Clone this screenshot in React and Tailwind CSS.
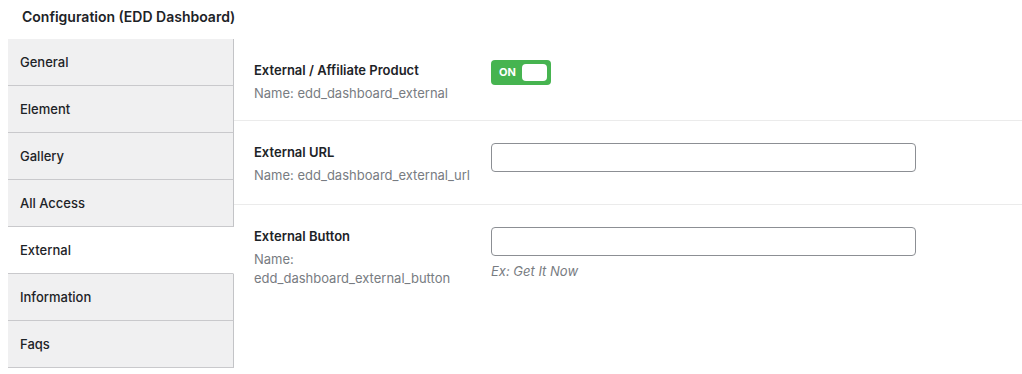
import { useState } from 'react';

const tabs = ['General', 'Element', 'Gallery', 'All Access', 'External', 'Information', 'Faqs'];

const Toggle = ({ on, onClick }) => (
    <button
        onClick={onClick}
        className={`w-[60px] h-[25px] rounded-[4px] flex items-center justify-between pl-[8px] pr-[4px] ${on ? 'bg-[#46b450]' : 'bg-[#c3c4c7]'}`}
    >
        <span className="text-white text-[11px] font-bold leading-none">{on ? 'ON' : 'OFF'}</span>
        <span className="w-[25px] h-[17px] bg-white rounded-[4px]"></span>
    </button>
);

const Row = ({ label, name, children, last, pad }) => (
    <div className={`flex pl-[20px] pt-[21px] ${pad} ${last ? '' : 'border-b border-[#ebebeb]'}`}>
        <div className="w-[220px] shrink-0 mr-[17px]">
            <div className="text-[13px] leading-[20px] font-semibold text-[#1d2327]">{label}</div>
            <div className="mt-[4px] text-[13px] leading-[19px] text-[#787c82]">Name: {name}</div>
        </div>
        <div>{children}</div>
    </div>
);

const App = () => {
    const [ active, setActive ] = useState('External');
    const [ external, setExternal ] = useState(true);

    return (
        <div className="bg-white w-[1022px] h-[374px] overflow-hidden font-['Inter',sans-serif] text-[#1d2327]">
            <h2 className="px-[22px] pt-[8px] h-[39px] text-[14px] leading-[18px] font-semibold">Configuration (EDD Dashboard)</h2>

            <div className="flex">
                <div className="w-[226px] ml-[8px] shrink-0">
                    {tabs.map((tab) => (
                        <div
                            key={tab}
                            onClick={() => setActive(tab)}
                            className={`h-[47px] flex items-center pl-[12px] pt-[2px] text-[13px] font-medium cursor-pointer border-b border-[#c9c9cc] ${active == tab ? 'bg-white border-r border-r-transparent' : 'bg-[#f0f0f1] border-r border-r-[#c3c4c7]'}`}
                        >
                            {tab}
                        </div>
                    ))}
                </div>

                <div className="flex-1">
                    <Row label="External / Affiliate Product" name="edd_dashboard_external" pad="pb-[17px]">
                        <Toggle on={external} onClick={() => setExternal(!external)} />
                    </Row>
                    <Row label="External URL" name="edd_dashboard_external_url" pad="pb-[19px]">
                        <input type="text" className="mt-[1px] w-[425px] h-[29px] border border-[#8c8f94] rounded-[4px] px-2 text-[13px] outline-none" />
                    </Row>
                    <Row label="External Button" name="edd_dashboard_external_button" last>
                        <input type="text" className="mt-[1px] w-[425px] h-[29px] border border-[#8c8f94] rounded-[4px] px-2 text-[13px] outline-none" />
                        <p className="mt-[7px] text-[13px] leading-[16px] italic text-[#787c82]">Ex: Get It Now</p>
                    </Row>
                </div>
            </div>
        </div>
    )
}

export default App;
